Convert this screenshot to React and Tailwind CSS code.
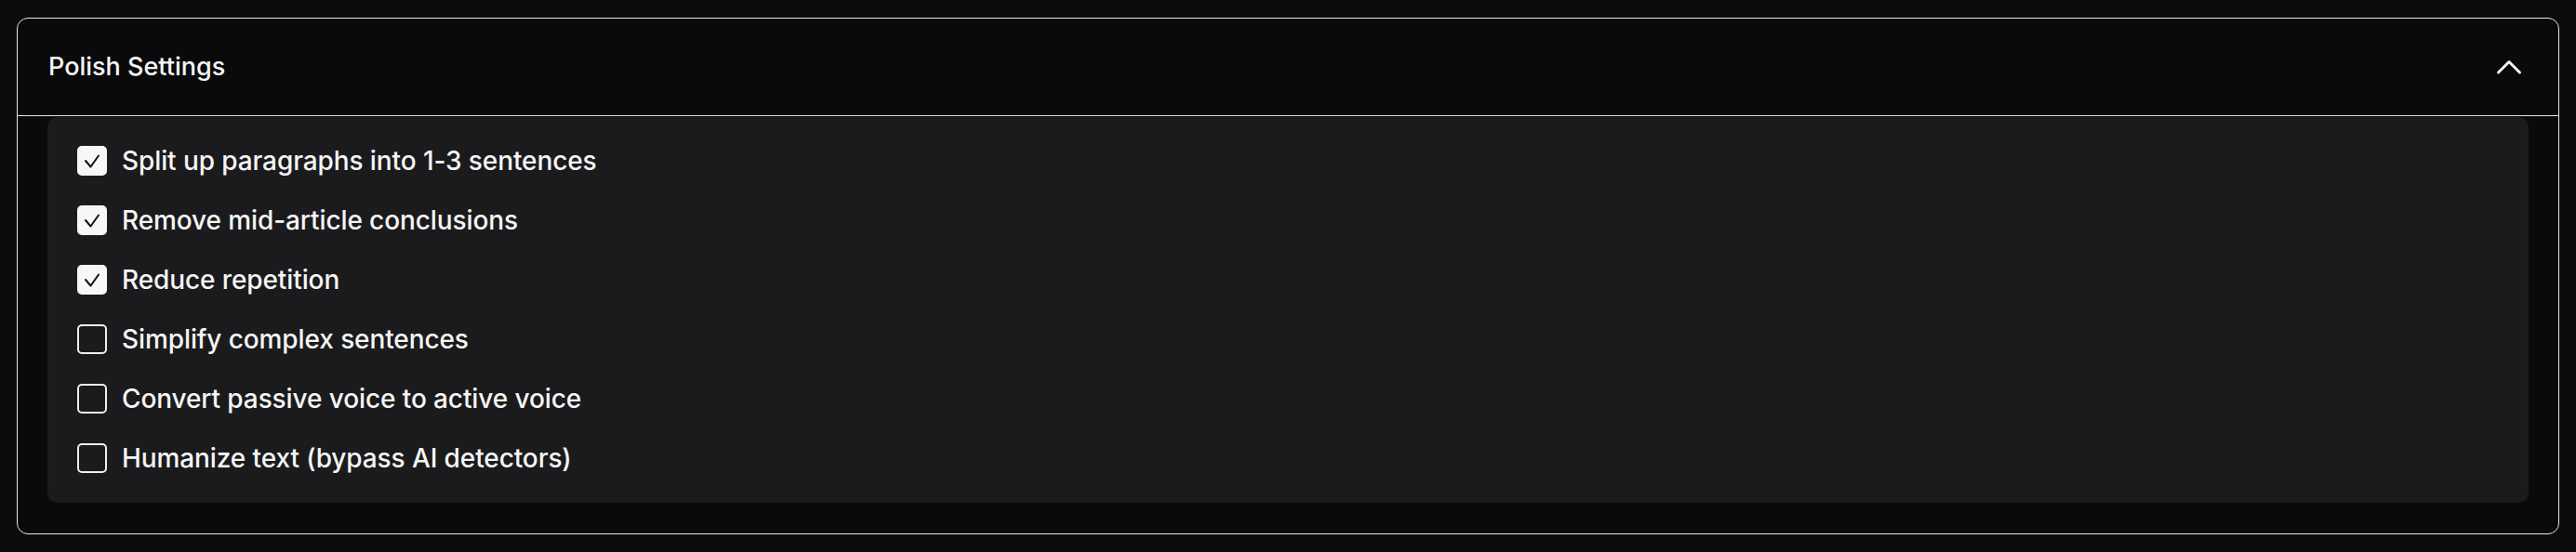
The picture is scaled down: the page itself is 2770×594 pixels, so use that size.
import React, { useState } from "react";

const items = [
  { label: "Split up paragraphs into 1-3 sentences", checked: true },
  { label: "Remove mid-article conclusions", checked: true },
  { label: "Reduce repetition", checked: true },
  { label: "Simplify complex sentences", checked: false },
  { label: "Convert passive voice to active voice", checked: false },
  { label: "Humanize text (bypass AI detectors)", checked: false },
];

function Box({ checked }) {
  if (checked) {
    return (
      <span className="flex h-8 w-8 shrink-0 items-center justify-center rounded-[5px] bg-[#f7f7f7]">
        <svg width="32" height="32" viewBox="0 0 32 32" fill="none">
          <path d="M9 16 L14.5 22.5 L23 10.5" stroke="#111" strokeWidth="2" strokeLinecap="round" strokeLinejoin="round" />
        </svg>
      </span>
    );
  }
  return <span className="h-8 w-8 shrink-0 rounded-[5px] border-2 border-[#eeeeee]" />;
}

export default function App() {
  const [state, setState] = useState(items.map((i) => i.checked));
  return (
    <div className="min-h-[594px] bg-[#0b0b0d] p-[18px] pt-[19px]" style={{ fontFamily: "Inter, 'Liberation Sans', sans-serif" }}>
      <div className="overflow-hidden rounded-xl border-[1.5px] border-[#e6e6e6] bg-[#0a0a0c]">
        <div className="flex h-[105px] items-center justify-between border-b-[1.5px] border-[#e6e6e6] pl-[33px] pr-[33px]">
          <span className="text-[27px] font-medium text-[#f5f5f5]">Polish Settings</span>
          <svg width="40" height="40" viewBox="0 0 40 40" fill="none">
            <path d="M8.5 26 L20 14.5 L31.5 26" stroke="#f5f5f5" strokeWidth="3" strokeLinecap="round" strokeLinejoin="round" />
          </svg>
        </div>
        <div className="px-[32px] pb-[33px] pt-[1px]">
          <div className="flex flex-col gap-8 rounded-[10px] bg-[#1b1b1d] px-8 pb-8 pt-[31px]">
            {items.map((it, i) => (
              <label key={it.label} className="flex cursor-pointer items-center gap-4" onClick={() => setState((s) => s.map((v, j) => (j === i ? !v : v)))}>
                <Box checked={state[i]} />
                <span className="text-[28px] font-medium leading-8 tracking-[-0.1px] text-[#f5f5f5]">{it.label}</span>
              </label>
            ))}
          </div>
        </div>
      </div>
    </div>
  );
}
